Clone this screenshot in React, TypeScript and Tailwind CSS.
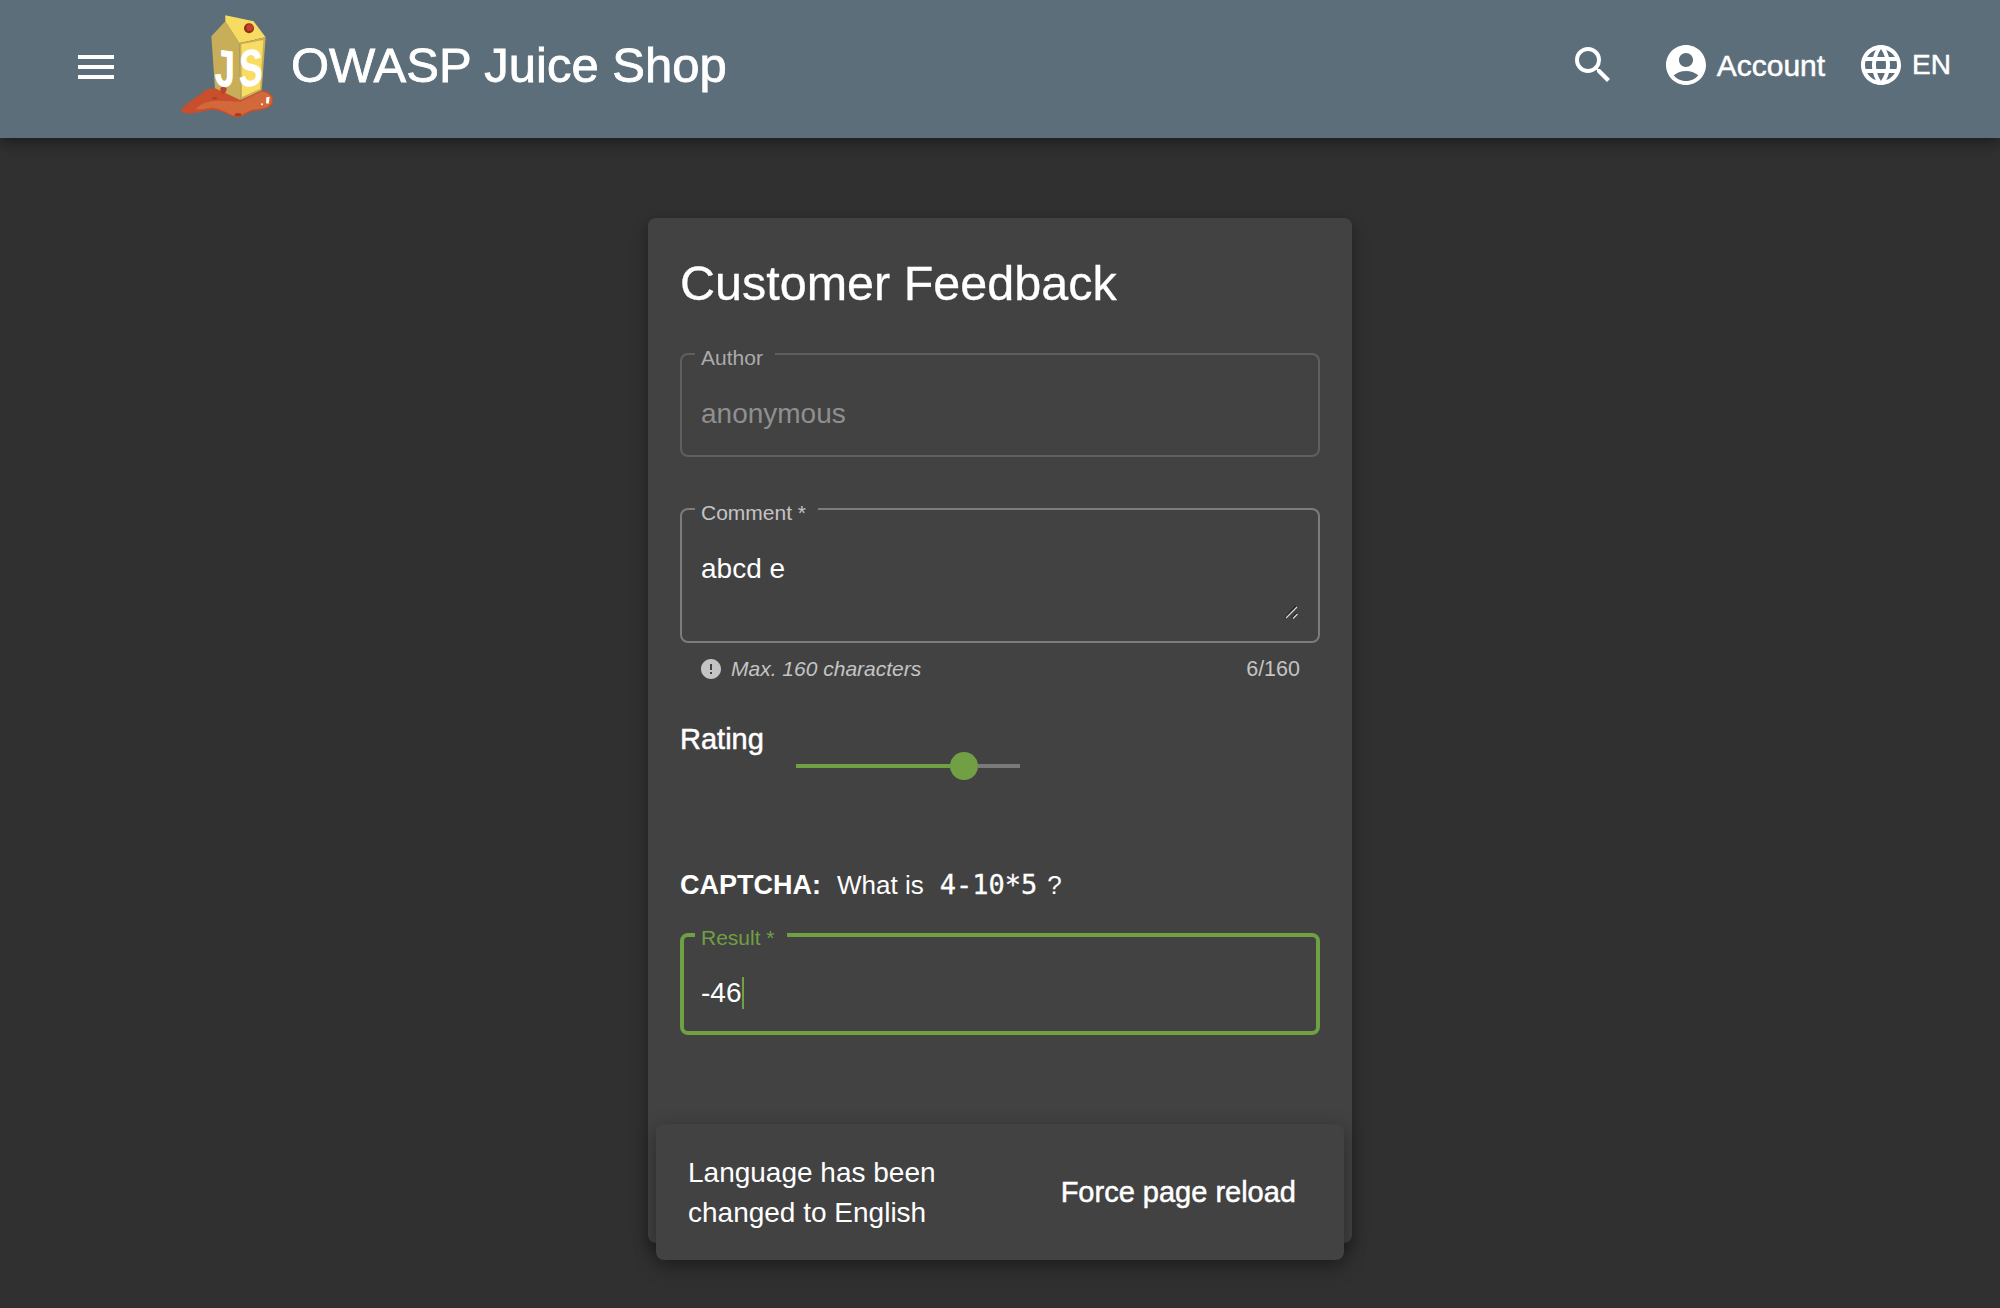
import { MdAccountCircle, MdError, MdLanguage, MdMenu, MdSearch } from "react-icons/md";

function JuiceLogo() {
  return (
    <svg viewBox="0 0 360 375" className="w-[120px] h-[125px] shrink-0">
      {/* puddle */}
      <path d="M30 322 C42 300 78 284 100 264 C120 252 140 254 160 268 L208 290 L270 262 C296 264 308 278 306 296 C302 322 262 320 240 326 C222 334 208 346 190 342 C168 334 146 320 120 320 C94 324 40 342 30 322 Z" fill="#c94f2c" />
      <path d="M74 318 C92 298 124 290 158 294 L208 296 L270 266 C296 268 304 280 302 296 C298 318 262 316 238 322 C222 330 206 342 190 338 C168 330 146 314 120 314 C104 316 88 322 74 318 Z" fill="#d2693a" />
      <ellipse cx="201" cy="335" rx="10" ry="5" fill="#a83a22" />
      <ellipse cx="131" cy="286" rx="7" ry="3" fill="#a83a22" />
      <path d="M286 283 L296 281 L293 302 L285 301 Z" fill="#ffffff" />
      <circle cx="273" cy="304" r="3" fill="#ffffff" />
      {/* carton */}
      <path d="M121 100 L163 55 L205 120 L208 291 L132 256 Z" fill="#c8ae58" />
      <path d="M163 37 L248 55 L284 103 L205 120 L163 55 Z" fill="#f8dc62" />
      <path d="M205 120 L284 103 L272 262 L208 291 Z" fill="#c8ae58" />
      <path d="M211 124 L277 111 L267 258 L213 282 Z" fill="#f9dd63" />
      <circle cx="234" cy="76" r="15" fill="#8f2c1a" />
      <circle cx="236" cy="74" r="10" fill="#c8422a" />
      <path d="M148 258 C148 250 165 248 167 258 C167 266 160 272 156 274 C151 270 148 264 148 258 Z" fill="#b8432a" />
      <text x="0" y="0" transform="matrix(0.72 0.1 0 1 126 246)" fontFamily="'Liberation Mono', monospace" fontWeight="700" fontSize="165" fill="#ffffff">J</text>
      <text x="0" y="0" transform="matrix(0.72 -0.1 0 1 204 254)" fontFamily="'Liberation Mono', monospace" fontWeight="700" fontSize="165" fill="#ffffff">S</text>
    </svg>
  );
}

export default function App() {
  return (
    <div className="relative h-[1308px] overflow-hidden bg-[#303030] text-white font-['Liberation_Sans',Arial,sans-serif]">
      {/* Toolbar */}
      <header className="relative z-10 flex items-center h-[138px] pb-[8px] bg-[#5b6e7a] shadow-[0_4px_14px_rgba(0,0,0,0.45)]">
        <button className="ml-[72px] mt-[4px] w-12 h-12 flex items-center justify-center">
          <MdMenu className="w-12 h-12 text-white" />
        </button>
        <div className="ml-[51px] flex items-center">
          <JuiceLogo />
          <span className="text-[49px] leading-none [-webkit-text-stroke:0.8px_white]">OWASP Juice Shop</span>
        </div>
        <div className="ml-auto flex items-center">
          <MdSearch className="w-12 h-12 text-white" />
          <div className="ml-[45px] flex items-center">
            <MdAccountCircle className="w-12 h-12 text-white" />
            <span className="ml-[7px] text-[30px] [-webkit-text-stroke:0.5px_white]">Account</span>
          </div>
          <div className="ml-[32px] mr-[49px] flex items-center">
            <MdLanguage className="w-12 h-12 text-white" />
            <span className="ml-[7px] text-[28px] [-webkit-text-stroke:0.5px_white]">EN</span>
          </div>
        </div>
      </header>

      {/* Feedback card */}
      <main className="mx-auto mt-[80px] w-[704px] h-[1025px] rounded-lg bg-[#424242] px-8 pt-[33px] shadow-[0_6px_16px_rgba(0,0,0,0.35)]">
        <h1 className="text-[48.5px] leading-[64px] [-webkit-text-stroke:0.3px_white]">Customer Feedback</h1>

        <fieldset className="mt-[38px] h-[104px] rounded-lg border-2 border-[#5f5f5f] px-[19px]">
          <legend className="ml-[-6px] pl-[6px] pr-[12px] h-[2px] text-[21px] leading-[2px] text-[#ababab]">
            <span className="relative top-[4px]">Author</span>
          </legend>
          <div className="mt-[41px] text-[28px] leading-[36px] text-[#8f8f8f]">anonymous</div>
        </fieldset>

        <fieldset className="relative mt-[51px] h-[135px] rounded-lg border-2 border-[#7c7c7c] px-[19px]">
          <legend className="ml-[-6px] pl-[6px] pr-[12px] h-[2px] text-[21px] leading-[2px] text-[#c4c4c4]">
            <span className="relative top-[4px]">Comment *</span>
          </legend>
          <div className="mt-[41px] text-[28px] leading-[36px]">abcd e</div>
          <svg viewBox="0 0 14 14" className="absolute right-[20px] bottom-[22px] w-[14px] h-[14px]">
            <path d="M1 13 L12 1" stroke="#1c1c1c" strokeWidth="1.2" />
            <path d="M2 13 L13 2" stroke="#d8d8d8" strokeWidth="1.2" />
            <path d="M8 13 L13 8" stroke="#1c1c1c" strokeWidth="1.2" />
            <path d="M9 13.5 L13.5 9" stroke="#d8d8d8" strokeWidth="1.2" />
          </svg>
        </fieldset>
        <div className="mt-[13px] flex items-center px-[20px] text-[21px] leading-[26px] text-[#c4c4c4]">
          <MdError className="w-6 h-6 ml-[-1px] mr-[8px]" />
          <span className="italic">Max. 160 characters</span>
          <span className="ml-auto text-[21.5px]">6/160</span>
        </div>

        {/* Rating */}
        <div className="mt-[39px] flex items-start">
          <span className="text-[29px] leading-[36px] [-webkit-text-stroke:0.5px_white]">Rating</span>
          <div className="ml-[32px] mt-[31px] flex items-center w-[224px] h-[28px]">
            <div className="w-[156px] h-1 bg-[#709f44]" />
            <div className="w-[28px] h-[28px] rounded-full bg-[#709f44] shrink-0 -ml-[2px]" />
            <div className="flex-1 h-1 bg-[#7a7a7a]" />
          </div>
        </div>

        {/* Captcha */}
        <div className="mt-[87px] flex items-center text-[26px] leading-[36px]">
          <span className="font-bold text-[27px]">CAPTCHA:</span>
          <span className="ml-[16px]">What is</span>
          <code className="ml-[16px] text-[27px] font-['DejaVu_Sans_Mono',monospace] [-webkit-text-stroke:0.3px_white]">4-10*5</code>
          <span className="ml-[10px]">?</span>
        </div>

        <fieldset className="mt-[30px] h-[102px] rounded-lg border-[4px] border-[#709f44] px-[17px]">
          <legend className="ml-[-6px] pl-[6px] pr-[12px] h-[4px] text-[21px] leading-[4px] text-[#709f44]">
            <span className="relative top-[3px]">Result *</span>
          </legend>
          <div className="mt-[38px] flex items-center text-[28px] leading-[36px]">
            -46<span className="ml-[1px] w-[1.5px] h-[32px] bg-[#709f44]" />
          </div>
        </fieldset>
      </main>

      {/* Snackbar */}
      <div className="absolute left-[656px] bottom-[48px] z-20 w-[688px] h-[136px] flex items-center rounded-lg bg-[#424242] pl-[32px] pr-[48px] shadow-[0_6px_20px_rgba(0,0,0,0.4)]">
        <p className="w-[300px] mt-[1px] text-[28px] leading-[40px]">Language has been changed to English</p>
        <button className="ml-auto text-[29px] leading-[40px] [-webkit-text-stroke:0.5px_white]">Force page reload</button>
      </div>
    </div>
  );
}
